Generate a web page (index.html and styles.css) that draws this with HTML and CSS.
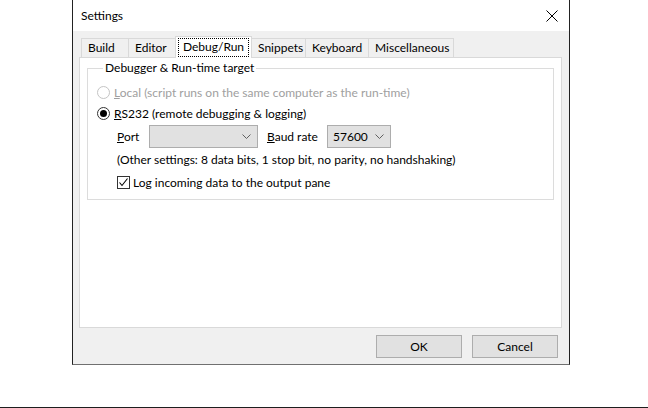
FILE: index.html
```html
<!DOCTYPE html>
<html>
<head>
<meta charset="utf-8">
<title>Settings</title>
<link rel="stylesheet" href="styles.css">
</head>
<body>
<div class="window">
  <div class="titlebar">
    <span class="title">Settings</span>
    <svg class="close" width="12" height="12" viewBox="0 0 12 12"><path d="M0.5 0.5L11.5 11.5M11.5 0.5L0.5 11.5" stroke="#000" stroke-width="1" fill="none"/></svg>
  </div>
  <div class="client">
    <div class="tabs">
      <div class="tab tab-build">Build</div>
      <div class="tab tab-editor">Editor</div>
      <div class="tab tab-active"><span class="focus">Debug/Run</span></div>
      <div class="tab tab-snippets">Snippets</div>
      <div class="tab tab-keyboard">Keyboard</div>
      <div class="tab tab-misc">Miscellaneous</div>
    </div>
    <div class="panel">
      <fieldset class="group">
        <legend>Debugger &amp; Run-time target</legend>
        <div class="row row-radio disabled">
          <span class="radio"></span>
          <span><u>L</u>ocal (script runs on the same computer as the run-time)</span>
        </div>
        <div class="row row-radio">
          <span class="radio checked"></span>
          <span><u>R</u>S232 (remote debugging &amp; logging)</span>
        </div>
        <div class="row row-port">
          <span class="lbl-port"><u>P</u>ort</span>
          <div class="combo combo-port">
            <span class="combo-text"></span>
            <svg class="chev" width="9" height="5" viewBox="0 0 9 5"><path d="M0.5 0.5L4.5 4.5L8.5 0.5" stroke="#606060" fill="none"/></svg>
          </div>
          <span class="lbl-baud"><u>B</u>aud rate</span>
          <div class="combo combo-baud">
            <span class="combo-text">57600</span>
            <svg class="chev" width="9" height="5" viewBox="0 0 9 5"><path d="M0.5 0.5L4.5 4.5L8.5 0.5" stroke="#606060" fill="none"/></svg>
          </div>
        </div>
        <div class="row row-other">(Other settings: 8 data bits, 1 stop bit, no parity, no handshaking)</div>
        <div class="row row-check">
          <span class="checkbox"><svg width="11" height="11" viewBox="0 0 11 11"><path d="M1.5 5.5L4 8.5L9.5 1.5" stroke="#000" stroke-width="1.1" fill="none"/></svg></span>
          <span>Log incoming data to the output pane</span>
        </div>
      </fieldset>
    </div>
    <div class="buttons">
      <button class="btn">OK</button>
      <button class="btn">Cancel</button>
    </div>
  </div>
</div>
<div class="baseline"></div>
</body>
</html>
```
FILE: styles.css
```css
* { box-sizing: border-box; }
html, body { margin: 0; padding: 0; }
body {
  width: 648px;
  height: 408px;
  overflow: hidden;
  background: #fff;
  font-family: Lato, "Noto Sans", sans-serif;
  font-size: 12px;
  color: #000;
}
.window {
  margin-left: 72px;
  width: 498px;
  height: 365px;
  border: 1px solid #222;
  border-top: 0;
  border-bottom-color: #707070;
  background: #f0f0f0;
  display: flex;
  flex-direction: column;
}
.titlebar {
  flex: none;
  height: 31px;
  background: #fff;
  display: flex;
  align-items: center;
  justify-content: space-between;
  padding: 0 11px 0 8px;
}
.title { line-height: 16px; margin-top: 1px; }
.close { display: block; margin-top: 1px; }
.client {
  flex: 1;
  display: flex;
  flex-direction: column;
  padding: 5px 7px 6px 6px;
}
.tabs {
  flex: none;
  height: 21px;
  display: flex;
  align-items: flex-end;
  padding-left: 2px;
  position: relative;
  z-index: 1;
}
.tab {
  height: 19px;
  border: 1px solid #d9d9d9;
  border-bottom: 0;
  background: #f0f0f0;
  padding-left: 6px;
  line-height: 17px;
  white-space: nowrap;
  margin-left: -1px;
}
.tab-build { width: 48px; margin-left: 0; }
.tab-editor { width: 49px; }
.tab-snippets { width: 55px; }
.tab-keyboard { width: 64px; }
.tab-misc { width: 86px; }
.tab-active {
  width: 77px;
  height: 22px;
  margin-left: -2px;
  margin-bottom: -1px;
  background: #fff;
  padding: 1px 1px 0;
  position: relative;
  z-index: 2;
  display: flex;
  justify-content: center;
  align-items: flex-start;
}
.focus {
  width: 71px;
  height: 19px;
  border: 1px dotted #000;
  line-height: 16px;
  text-align: center;
}
.panel {
  flex: none;
  height: 271px;
  border: 1px solid #d9d9d9;
  background: #fff;
  padding: 2px 7px 0;
}
.group {
  margin: 0;
  min-width: 0;
  padding: 6px 0 5px 9px;
  border: 1px solid #dcdcdc;
}
.group legend {
  padding: 0 2px;
  margin-left: 6px;
  line-height: 16px;
}
.row {
  display: flex;
  align-items: center;
  white-space: nowrap;
}
.row-radio { height: 21px; gap: 4px; }
.radio {
  width: 13px;
  height: 13px;
  border: 1px solid #333;
  border-radius: 50%;
  background: #fff;
  display: flex;
  align-items: center;
  justify-content: center;
}
.radio.checked::after {
  content: "";
  width: 7px;
  height: 7px;
  border-radius: 50%;
  background: #000;
}
.disabled { color: #a0a0a0; }
.disabled .radio { border-color: #c4c4c4; }
.row-port {
  height: 23px;
  margin-top: 1px;
  padding-left: 20px;
}
.lbl-port { width: 32px; }
.lbl-baud { width: 60px; margin-left: 9px; }
.combo {
  height: 23px;
  border: 1px solid #adadad;
  background: #e1e1e1;
  display: flex;
  align-items: center;
  padding-left: 5px;
}
.combo-port { width: 109px; }
.combo-baud { width: 64px; }
.combo-text { flex: 1; }
.chev { display: block; margin-right: 6px; }
.row-other { height: 23px; padding-left: 20px; }
.row-check { height: 23px; padding-left: 20px; gap: 3px; }
.checkbox {
  width: 13px;
  height: 13px;
  border: 1px solid #333;
  background: #fff;
  display: flex;
  align-items: center;
  justify-content: center;
}
.checkbox svg { display: block; }
.buttons {
  flex: none;
  margin-top: 7px;
  display: flex;
  justify-content: flex-end;
  gap: 10px;
  padding-right: 4px;
}
.btn {
  width: 86px;
  height: 23px;
  border: 1px solid #adadad;
  background: #e1e1e1;
  font: inherit;
  color: #000;
  padding: 0;
}
.baseline {
  margin-top: 42px;
  height: 1px;
  background: #1e1e1e;
}
```
